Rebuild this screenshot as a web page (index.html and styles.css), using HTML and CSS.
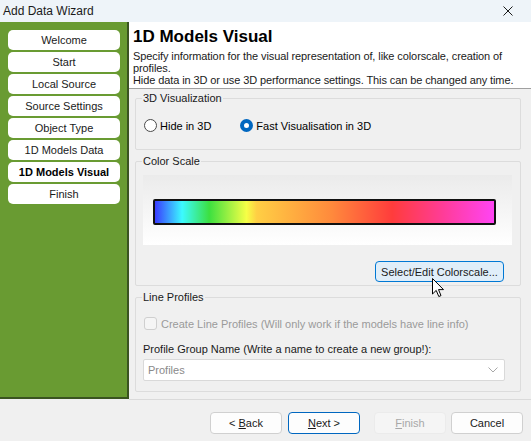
FILE: index.html
```html
<!DOCTYPE html>
<html lang="en">
  <head>
    <meta charset="UTF-8" />
    <title>Add Data Wizard</title>
    <link rel="stylesheet" href="styles.css">
  </head>
  <body>
    <div class="window">
      <!-- Title bar -->
      <div class="titlebar">
        <span class="title">Add Data Wizard</span>
        <svg class="close" width="10" height="10" viewBox="0 0 10 10">
          <path d="M0.5 0.5 L9.5 9.5 M9.5 0.5 L0.5 9.5" stroke="#1a1a1a" stroke-width="1" />
        </svg>
      </div>

      <div class="main">
        <!-- Steps -->
        <div class="steps">
          <div class="step">Welcome</div>
          <div class="step">Start</div>
          <div class="step">Local Source</div>
          <div class="step">Source Settings</div>
          <div class="step">Object Type</div>
          <div class="step">1D Models Data</div>
          <div class="step active">1D Models Visual</div>
          <div class="step">Finish</div>
        </div>

        <!-- Page -->
        <div class="page">
          <div class="page-header">
            <h1>1D Models Visual</h1>
            <p>Specify information for the visual representation of, like colorscale, creation of<br>profiles.<br>Hide data in 3D or use 3D performance settings. This can be changed any time.</p>
          </div>

          <div class="page-body">
            <fieldset class="group group-3d">
              <legend>3D Visualization</legend>
              <div class="radios">
                <label class="radio"><span class="dot"></span>Hide in 3D</label>
                <label class="radio checked"><span class="dot"></span>Fast Visualisation in 3D</label>
              </div>
            </fieldset>

            <fieldset class="group group-color">
              <legend>Color Scale</legend>
              <div class="preview">
                <div class="colorbar"></div>
              </div>
              <div class="btn-row">
                <button class="btn btn-hover">Select/Edit Colorscale...</button>
              </div>
            </fieldset>

            <fieldset class="group group-lines">
              <legend>Line Profiles</legend>
              <label class="check disabled"><span class="box"></span>Create Line Profiles (Will only work if the models have line info)</label>
              <div class="field-label">Profile Group Name (Write a name to create a new group!):</div>
              <div class="combo">
                <span>Profiles</span>
                <svg width="10" height="6" viewBox="0 0 10 6">
                  <path d="M0.5 0.5 L5 5 L9.5 0.5" fill="none" stroke="#a8a8a8" stroke-width="1" />
                </svg>
              </div>
            </fieldset>
          </div>
        </div>
      </div>

      <!-- Footer -->
      <div class="footer">
        <button class="btn nav">&lt; <u>B</u>ack</button>
        <button class="btn nav default"><u>N</u>ext &gt;</button>
        <button class="btn nav disabled finish"><u>F</u>inish</button>
        <button class="btn nav">Cancel</button>
      </div>

      <svg class="cursor" width="13" height="20" viewBox="0 0 13 20">
        <path d="M0.5 0.5 L0.5 16 L4.2 12.4 L6.8 18.5 L9 17.6 L6.5 11.6 L11.5 11.6 Z" fill="#fff" stroke="#000" stroke-width="1" stroke-linejoin="round" />
      </svg>
    </div>
  </body>
</html>
```

FILE: styles.css
```css
* {
  box-sizing: border-box;
}

body {
  margin: 0;
  font-family: "Liberation Sans", Arial, sans-serif;
  font-size: 11px;
  color: #000;
}

.window {
  position: relative;
  width: 531px;
  height: 441px;
  background: #f0f0f0;
  overflow: hidden;
}

.titlebar {
  height: 22px;
  display: flex;
  align-items: center;
  justify-content: space-between;
  padding: 0 18px 0 3px;
  background: #eef4f9;
  font-size: 12px;
  color: #1a1a1a;
}

.main {
  display: flex;
  height: 378px;
}

.steps {
  width: 129px;
  height: 377px;
  background: #699b32;
  border-right: 2px solid #3a5420;
  border-bottom: 2px solid #3a5420;
  padding: 8px 0 0 8px;
  display: flex;
  flex-direction: column;
  gap: 2px;
}

.step {
  width: 112px;
  height: 20px;
  background: #fff;
  border-radius: 5px;
  display: flex;
  align-items: center;
  justify-content: center;
  color: #1a1a1a;
}

.step.active {
  font-weight: bold;
  color: #000;
}

.page {
  flex: 1;
  display: flex;
  flex-direction: column;
  border-bottom: 1px solid #dadada;
}

.page-header {
  height: 67px;
  background: #fff;
  border-bottom: 1px solid #a0a0a0;
  padding: 3px 0 0 4px;
}

.page-header h1 {
  margin: 0;
  font-size: 17px;
  line-height: 23px;
  font-weight: bold;
}

.page-header p {
  margin: 2px 0 0;
  line-height: 12px;
  white-space: nowrap;
  letter-spacing: -0.1px;
  color: #1a1a1a;
}

.page-body {
  padding: 2px 10px 0 6px;
  display: flex;
  flex-direction: column;
  gap: 4px;
}

.group {
  margin: 0;
  padding: 0 8px 0 7px;
  border: 1px solid #dcdcdc;
  border-radius: 2px;
}

.group legend {
  padding: 0 1px;
  margin-left: -1px;
  font-size: 11px;
  line-height: 14px;
  color: #1a1a1a;
}

.group-3d {
  height: 59px;
}

.radios {
  display: flex;
  gap: 29px;
  margin-top: 14px;
  padding-left: 1px;
}

.radio {
  display: flex;
  align-items: center;
  gap: 3px;
}

.radio .dot {
  width: 13px;
  height: 13px;
  border: 1px solid #4a4a4a;
  border-radius: 50%;
  background: #fff;
}

.radio.checked .dot {
  border: 4px solid #0067c0;
  background: #fff;
}

.group-color {
  height: 132px;
}

.preview {
  height: 70px;
  margin-top: 7px;
  background: linear-gradient(#ebebeb, #ffffff);
  padding: 24px 16px 0 10px;
}

.colorbar {
  height: 26px;
  border: 2px solid #111;
  border-radius: 2px;
  background: linear-gradient(90deg, #3a3cff 0%, #3cfaff 8%, #3ce040 16%, #f6ff46 27%, #ffcf44 30%, #ff8a3c 52%, #ff3c3c 70%, #ff3c98 85%, #ff44f4 100%);
}

.btn-row {
  display: flex;
  justify-content: flex-end;
  margin-top: 16px;
  padding-right: 8px;
}

.btn {
  font-family: inherit;
  font-size: 11px;
  color: #1a1a1a;
  background: #fdfdfd;
  border: 1px solid #d0d0d0;
  border-radius: 4px;
  cursor: pointer;
}

.btn-hover {
  height: 21px;
  width: 129px;
  padding: 0;
  background: #e0eef9;
  border-color: #0078d4;
}

.group-lines {
  height: 102px;
}

.check {
  display: flex;
  align-items: center;
  gap: 4px;
  margin-top: 13px;
  margin-left: 1px;
}

.check .box {
  width: 13px;
  height: 13px;
  border: 1px solid #cfcfcf;
  border-radius: 3px;
  background: #f5f5f5;
}

.check.disabled {
  color: #9a9a9a;
}

.field-label {
  margin-top: 13px;
  color: #1a1a1a;
}

.combo {
  height: 22px;
  width: 362px;
  margin-top: 4px;
  background: #fff;
  border: 1px solid #d9d9d9;
  border-radius: 2px;
  display: flex;
  align-items: center;
  justify-content: space-between;
  padding: 0 6px 0 4px;
  color: #8a8a8a;
}

.footer {
  display: flex;
  justify-content: flex-end;
  padding: 12px 8px 0 0;
}

.nav {
  width: 72px;
  height: 22px;
  padding: 0;
  margin-left: 6px;
}

.nav.default {
  border: 1px solid #0067c0;
}

.nav.finish {
  margin-left: 14px;
}

.nav + .nav:last-child {
  margin-left: 5px;
}

.nav.disabled {
  background: #f5f5f5;
  border-color: #ebebeb;
  color: #a8a8a8;
}

.cursor {
  position: absolute;
  left: 432px;
  top: 278px;
}
```
